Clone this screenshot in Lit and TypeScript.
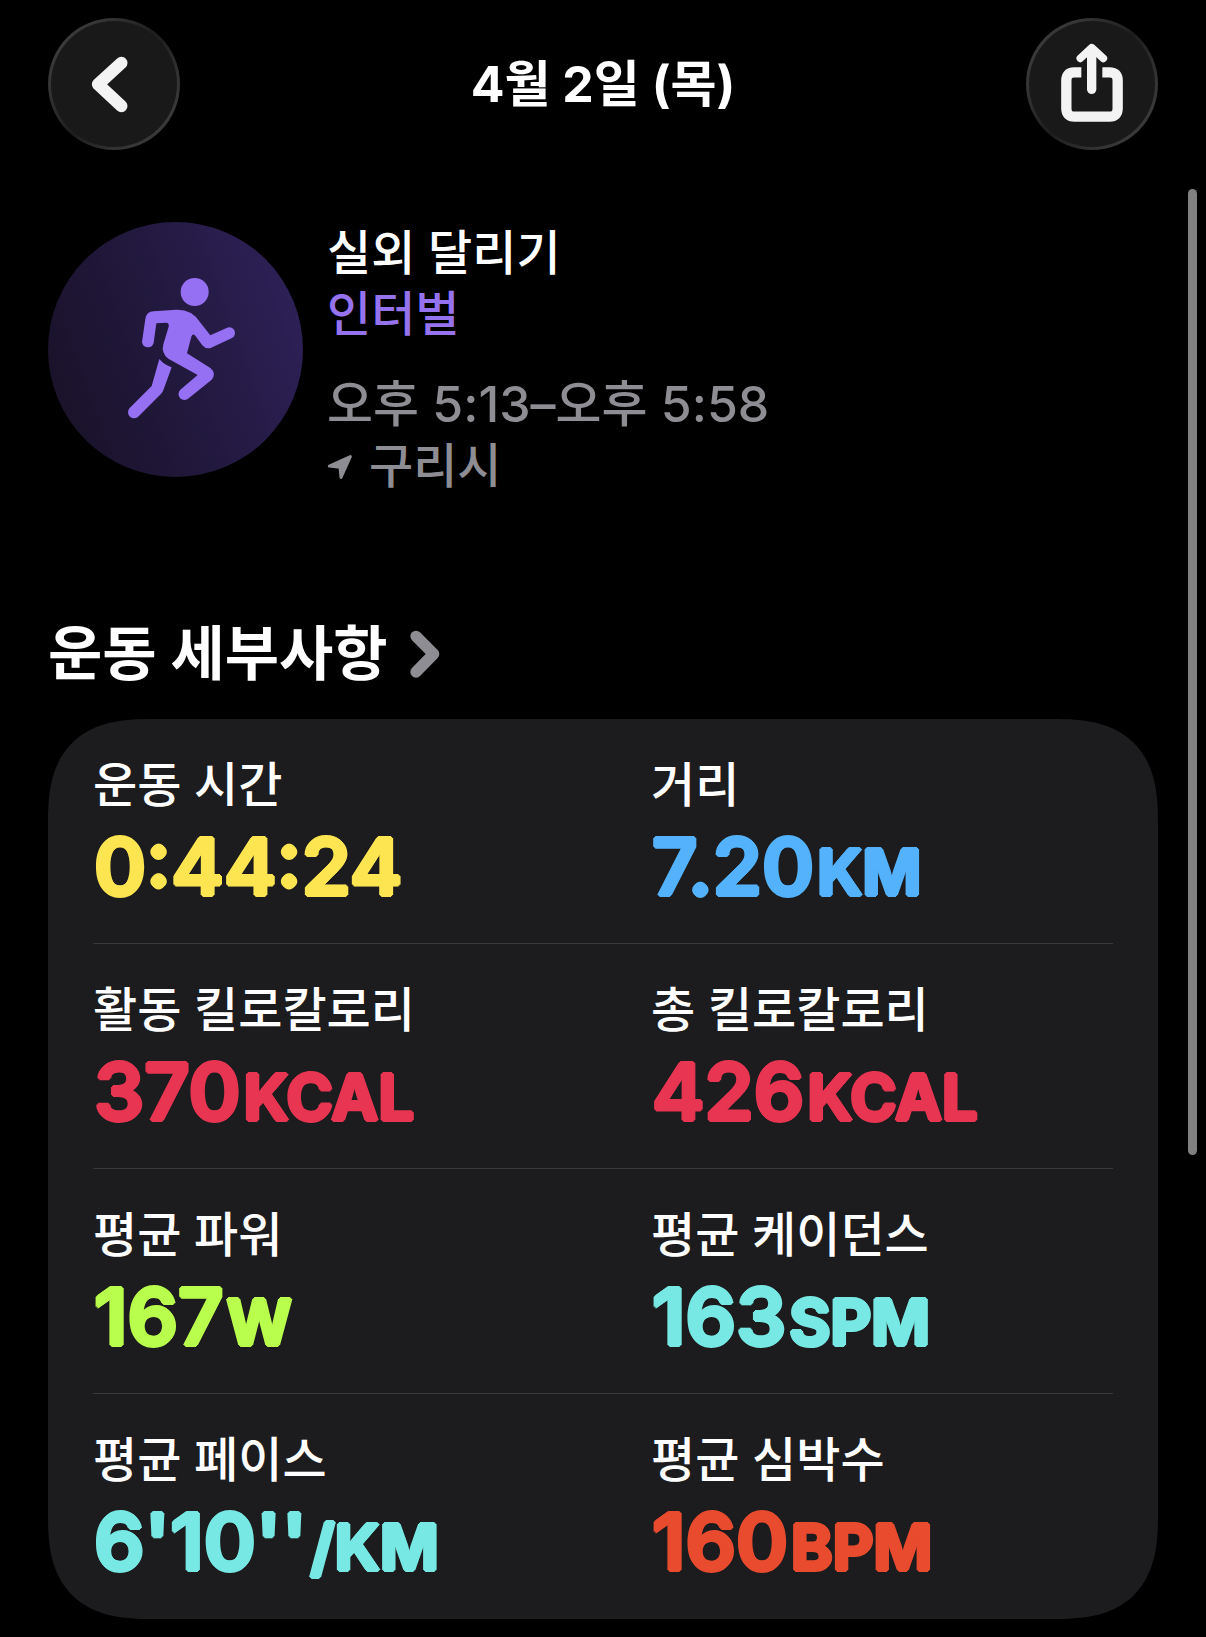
import { LitElement, html, css, svg } from "lit";
import { customElement, property } from "lit/decorators.js";

interface Metric {
  label: string;
  value: string;
  unit: string;
  tone: string;
}

const METRICS: Metric[] = [
  { label: "운동 시간", value: "0:44:24", unit: "", tone: "yellow" },
  { label: "거리", value: "7.20", unit: "KM", tone: "blue" },
  { label: "활동 킬로칼로리", value: "370", unit: "KCAL", tone: "red" },
  { label: "총 킬로칼로리", value: "426", unit: "KCAL", tone: "red" },
  { label: "평균 파워", value: "167", unit: "W", tone: "green" },
  { label: "평균 케이던스", value: "163", unit: "SPM", tone: "cyan" },
  { label: "평균 페이스", value: "6'10''", unit: "/KM", tone: "cyan" },
  { label: "평균 심박수", value: "160", unit: "BPM", tone: "orange" },
];

const backIcon = svg`
  <path d="M274 189 L204 253 L274 318" fill="none" stroke="#f3f3f3" stroke-width="37"
    stroke-linecap="round" stroke-linejoin="round" />`;

const shareIcon = svg`
  <g fill="none" stroke="#f3f3f3">
    <path d="M244 217 H222 Q199 217 199 242 V325 Q199 350 224 350 H328 Q353 350 353 325 V242 Q353 217 329 217 H307"
      stroke-width="31" />
    <path d="M275 150 V268" stroke-width="28" stroke-linecap="round" />
    <path d="M241 175 L275 143 L310 175" stroke-width="23" stroke-linecap="round" stroke-linejoin="round" />
  </g>`;

@customElement("metric-cell")
export class MetricCell extends LitElement {
  @property() label = "";
  @property() value = "";
  @property() unit = "";
  @property() tone = "";

  static styles = css`
    :host {
      display: block;
      min-width: 0;
    }
    .label {
      font-size: 48px;
      font-weight: 500;
      line-height: 64px;
      color: #fff;
      margin: 0;
    }
    /* A ring of hard shadows thickens the strokes and rounds their ends. */
    .value {
      font-family: Inter, "Liberation Sans", sans-serif;
      font-size: 79px;
      font-weight: 600;
      line-height: 98px;
      margin: 0;
      padding-left: 1px;
      white-space: nowrap;
      text-shadow:
        2px 0 currentColor, -2px 0 currentColor, 0 2px currentColor, 0 -2px currentColor,
        1px 1px currentColor, -1px 1px currentColor, 1px -1px currentColor, -1px -1px currentColor;
    }
    .unit {
      margin-left: 3px;
      font-size: 63px;
      font-weight: 700;
      line-height: 1;
    }
    .yellow { color: #fde552; }
    .blue { color: #53b2fb; }
    .red { color: #e73552; }
    .green { color: #b9fd4d; }
    .cyan { color: #77e8e3; }
    .orange { color: #e94b2e; }
  `;

  render() {
    return html`
      <p class="label">${this.label}</p>
      <p class="value ${this.tone}">${this.value}${this.unit ? html`<span class="unit">${this.unit}</span>` : ""}</p>
    `;
  }
}

@customElement("app-root")
export class AppRoot extends LitElement {
  static styles = css`
    :host {
      display: block;
      box-sizing: border-box;
      position: relative;
      min-height: 100vh;
      padding: 18px 48px;
      background: #000;
      color: #fff;
      font-family: Inter, "Noto Sans CJK KR", sans-serif;
    }
    .bar {
      display: flex;
      align-items: center;
      justify-content: space-between;
    }
    .title {
      margin: 0;
      font-size: 50px;
      font-weight: 700;
      line-height: 64px;
    }
    .round {
      box-sizing: border-box;
      width: 132px;
      height: 132px;
      padding: 0;
      border: 3px solid transparent;
      border-radius: 50%;
      background:
        linear-gradient(#191919, #191919) padding-box,
        linear-gradient(130deg, #3c3c3c 10%, #343434 25%, #1d1d1d 50%, #343434 75%, #3c3c3c 90%) border-box;
    }
    .glyph {
      display: block;
      width: 132px;
      height: 132px;
      margin: -3px;
    }
    .summary {
      display: flex;
      align-items: flex-start;
      gap: 24px;
      margin-top: 72px;
    }
    .badge {
      flex: none;
      width: 255px;
      height: 255px;
      border-radius: 50%;
      background: linear-gradient(70deg, #191228 5%, #21183c 45%, #2e2159 95%);
    }
    .lines {
      display: flex;
      flex-direction: column;
      font-size: 48px;
      font-weight: 500;
      line-height: 61px;
    }
    .lines p {
      margin: 0;
    }
    .kind {
      color: #9673ee;
    }
    .muted {
      color: #8e8d93;
    }
    .when {
      padding-top: 30px;
      font-size: 50px;
    }
    .place {
      display: flex;
      align-items: center;
      gap: 16px;
    }
    .arrow {
      width: 26px;
      height: 26px;
    }
    .heading {
      margin: 118px 0 25px;
      font-size: 59px;
      font-weight: 700;
      line-height: 80px;
    }
    .more {
      display: inline-flex;
      align-items: center;
      gap: 22px;
      color: inherit;
      text-decoration: none;
    }
    .chevron {
      width: 30px;
      height: 48px;
    }
    .card {
      padding: 0 45px;
      border-radius: 80px;
      background: #1c1c1e;
    }
    @supports (corner-shape: squircle) {
      .card {
        border-radius: 104px;
        corner-shape: superellipse(1.4);
      }
    }
    .row {
      display: grid;
      grid-template-columns: 1fr 1fr;
      column-gap: 96px;
      padding: 34px 0 28px;
      border-bottom: 1px solid #39393b;
    }
    .row:last-child {
      border-bottom-color: transparent;
    }
    .thumb {
      position: absolute;
      top: 189px;
      right: 9px;
      width: 9px;
      height: 966px;
      border-radius: 5px;
      background: #808080;
    }
  `;

  render() {
    const rows: Metric[][] = [];
    for (let i = 0; i < METRICS.length; i += 2) rows.push(METRICS.slice(i, i + 2));

    return html`
      <header class="bar">
        <button class="round" type="button" aria-label="뒤로">
          <svg class="glyph" viewBox="54 54 396 396" aria-hidden="true">${backIcon}</svg>
        </button>
        <h1 class="title">4월 2일 (목)</h1>
        <button class="round" type="button" aria-label="공유">
          <svg class="glyph" viewBox="78 54 396 396" aria-hidden="true">${shareIcon}</svg>
        </button>
      </header>

      <section class="summary">
        <svg class="badge" viewBox="24 36 765 765" aria-hidden="true">
          <g fill="#9670f3">
            <circle cx="464" cy="246" r="42" />
            <path d="M316 327 Q319 305 341 304 L410 299 Q455 298 479 335 L511 376 L560 354 A17 17 0 0 1 576 384 L512 414 Q497 418 487 406 L466 377 Q458 369 454 380 L441 430 L511 474 Q530 490 515 509 L446 565 A18 18 0 0 1 421 539 L473 495 L385 446 Q363 430 370 403 L386 350 Q388 338 378 338 L349 340 L341 399 A18 18 0 0 1 306 396 Z" />
            <path d="M358 447 Q372 464 395 472 L371 538 Q369 546 362 553 L296 619 A18 18 0 0 1 269 594 L335 528 Z" />
          </g>
        </svg>
        <div class="lines">
          <p>실외 달리기</p>
          <p class="kind">인터벌</p>
          <p class="when muted">오후 5:13–오후 5:58</p>
          <p class="place muted">
            <svg class="arrow" viewBox="54 735 78 78" aria-hidden="true">
              <path d="M61 774 L124 746 L96 808 L93 778 Z" fill="#8e8d93" stroke="#8e8d93"
                stroke-width="9" stroke-linejoin="round" />
            </svg>
            <span>구리시</span>
          </p>
        </div>
      </section>

      <h2 class="heading">
        <a class="more" href="#details">
          <span>운동 세부사항</span>
          <svg class="chevron" viewBox="1139 88 90 144" aria-hidden="true">
            <path d="M1157 107 L1210 160 L1157 214" fill="none" stroke="#8e8d93" stroke-width="34"
              stroke-linecap="round" stroke-linejoin="round" />
          </svg>
        </a>
      </h2>

      <section class="card" id="details">
        ${rows.map(
          (row) => html`
            <div class="row">
              ${row.map(
                (m) => html`<metric-cell
                  .label=${m.label}
                  .value=${m.value}
                  .unit=${m.unit}
                  .tone=${m.tone}
                ></metric-cell>`
              )}
            </div>
          `
        )}
      </section>

      <div class="thumb"></div>
    `;
  }
}
